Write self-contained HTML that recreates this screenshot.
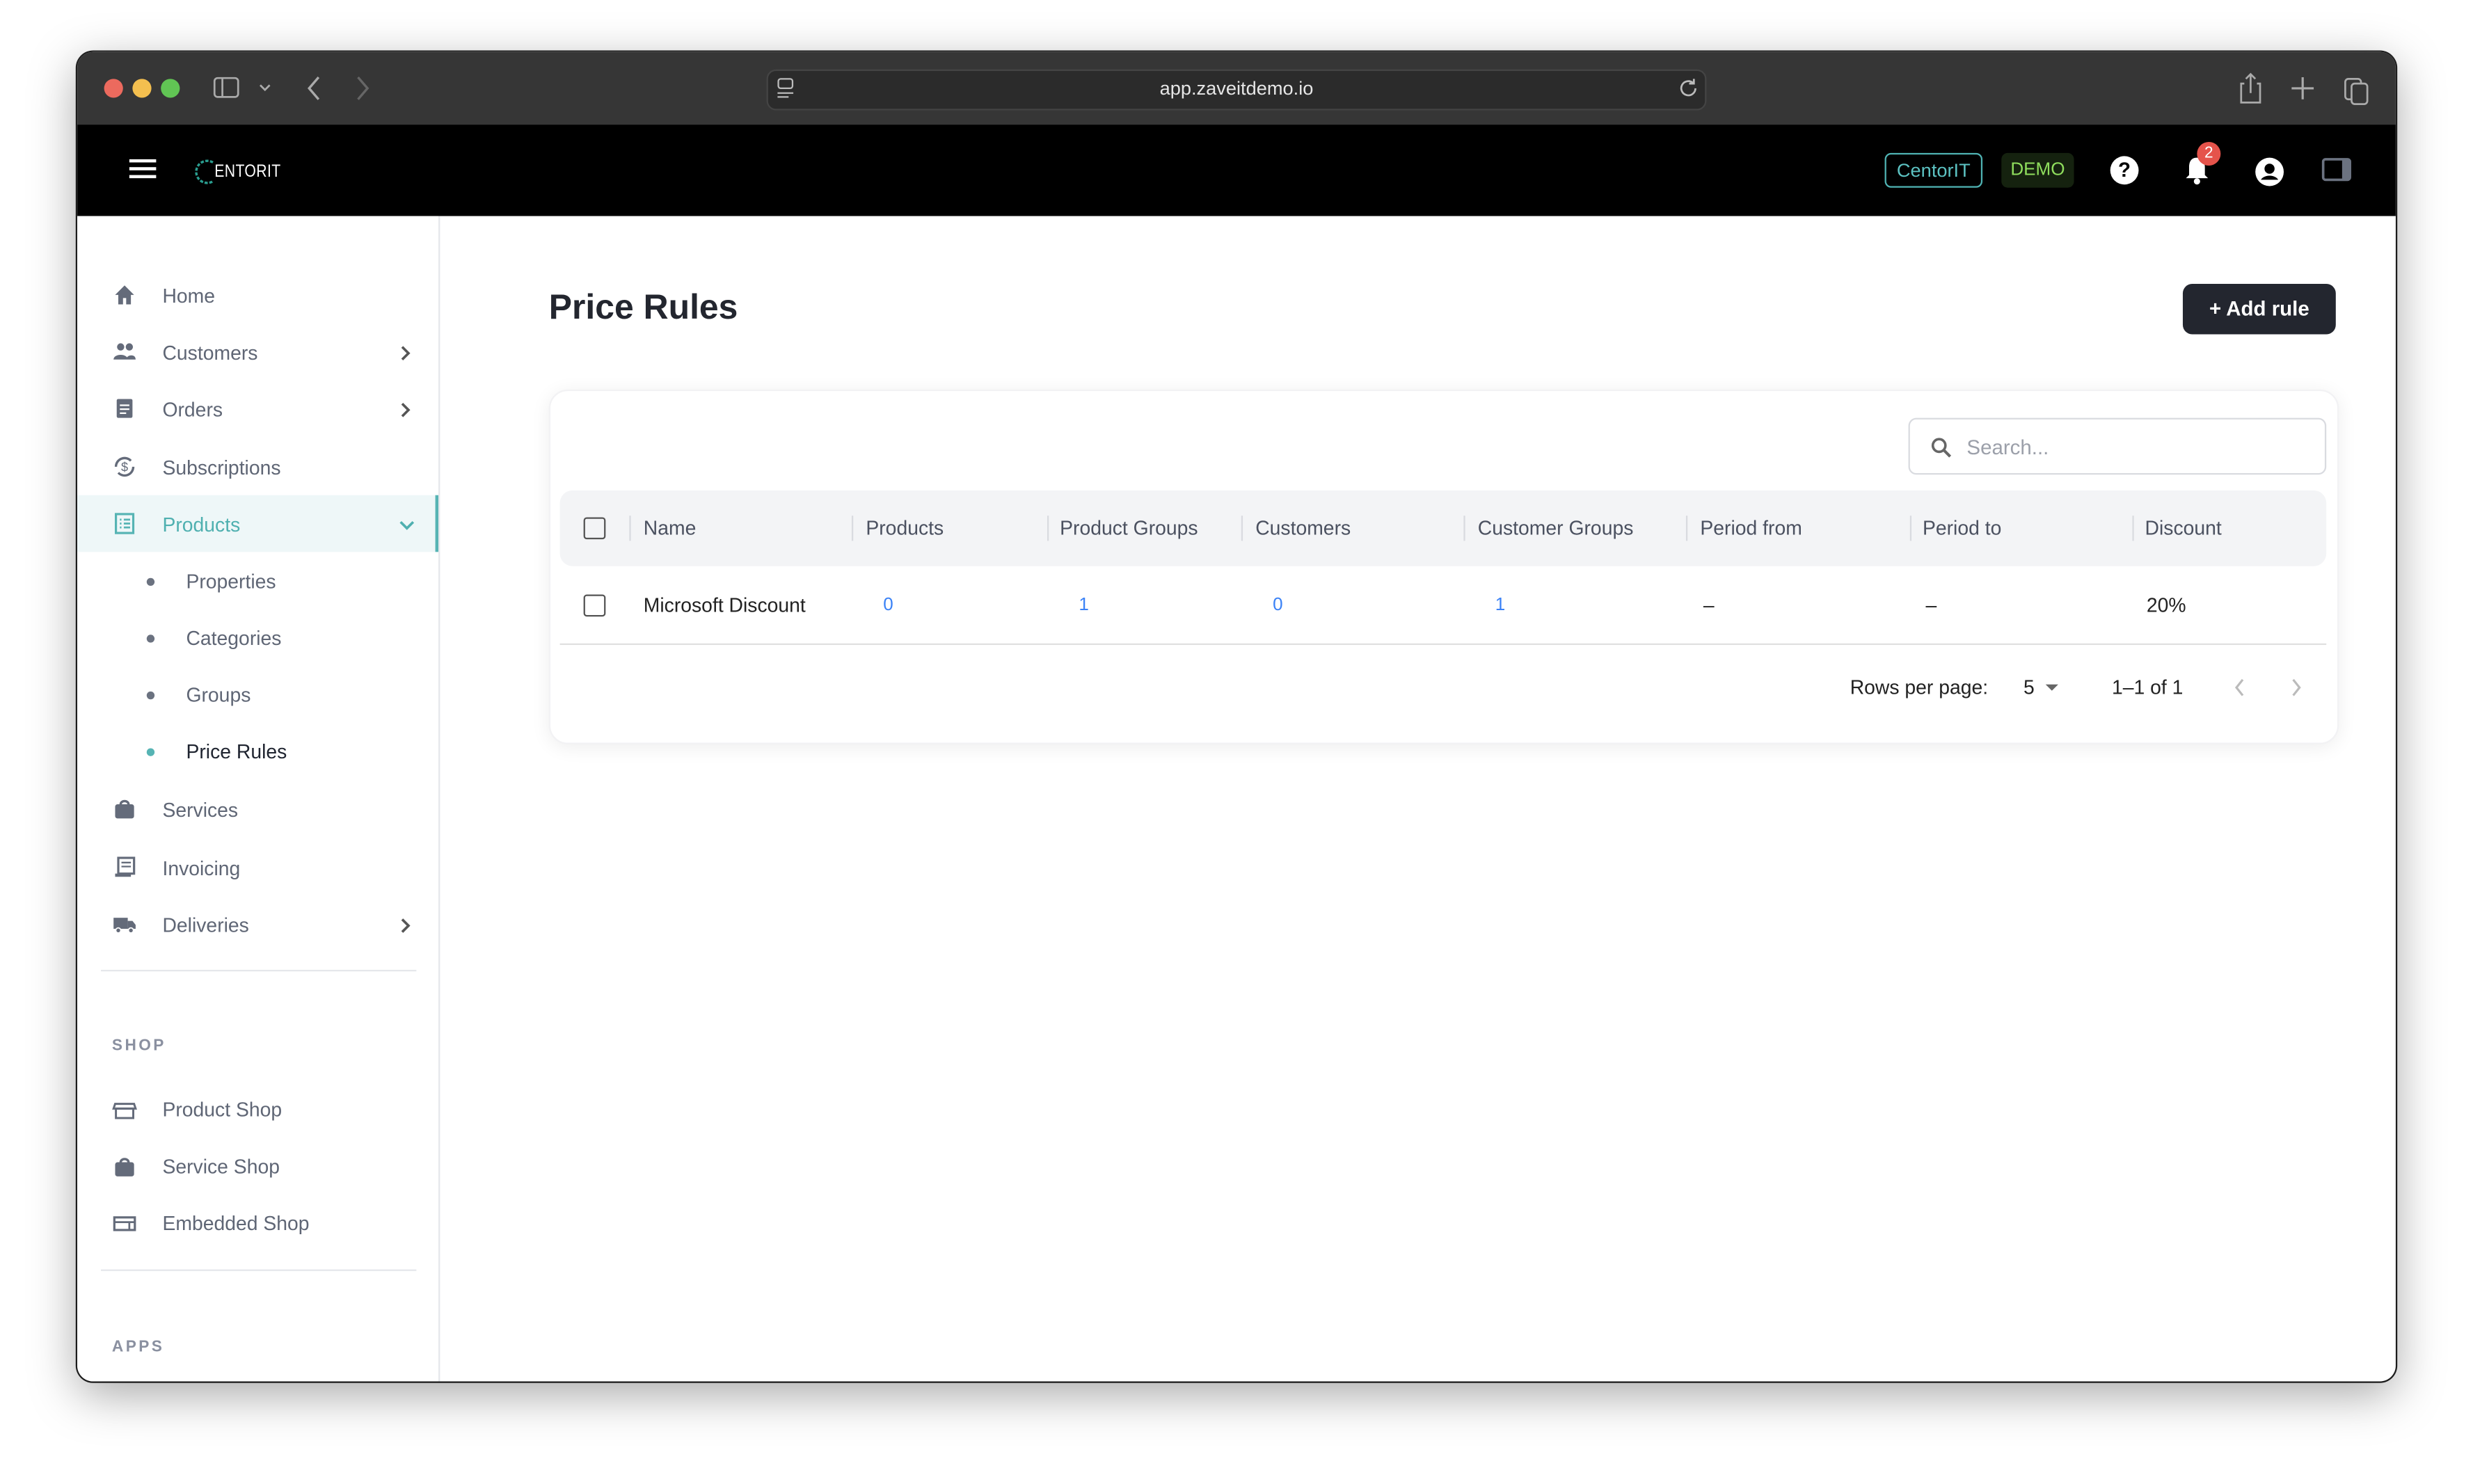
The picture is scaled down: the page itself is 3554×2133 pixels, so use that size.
<!DOCTYPE html>
<html><head><meta charset="utf-8"><style>
html,body{margin:0;padding:0;width:3554px;height:2132px;overflow:hidden;background:#fff;font-family:"Liberation Sans",sans-serif}
#s{position:absolute;left:0;top:0;width:1568px;height:941px;transform:scale(2.26658);transform-origin:0 0}
.a{position:absolute}
.win{left:49px;top:33px;width:1470px;height:843px;border-radius:10px;overflow:hidden;background:#fff;box-shadow:0 8px 30px rgba(0,0,0,.35),0 0 0 1px #222}
.tb{left:0;top:0;width:1470px;height:46px;background:#363636}
.hd{left:0;top:46px;width:1470px;height:58px;background:#000}
.side{left:0;top:104px;width:229px;height:739px;border-right:1px solid #e5e7eb;background:#fff;overflow:hidden}
.in{position:absolute;left:0;top:-33px;width:229px;height:800px}
.it{position:absolute;left:54px;font-size:12.5px;color:#5f6675;transform:translateY(-50%)}
.ic{position:absolute;left:22px;width:16px;height:16px;transform:translateY(-50%)}
.sub{position:absolute;left:69px;font-size:12.5px;color:#5f6675;transform:translateY(-50%)}
.dot{position:absolute;left:44px;width:5px;height:5px;border-radius:50%;background:#6b7280;transform:translateY(-50%)}
.chev{position:absolute;left:203px;transform:translateY(-50%)}
.th{position:absolute;top:0;height:48px;line-height:48px;font-size:12.5px;color:#4b5160}
.sep{position:absolute;top:16px;width:1px;height:16px;background:#d9dbe0}
.td{position:absolute;top:73px;font-size:12.5px;color:#222;transform:translateY(-50%)}
.bl{color:#3b82f6;font-size:11.5px}
</style></head><body><div id="s">
<div class="a win">
 <div class="a tb">
  <div class="a" style="left:17px;top:17px;width:12px;height:12px;border-radius:50%;background:#ec6a5e"></div>
  <div class="a" style="left:35px;top:17px;width:12px;height:12px;border-radius:50%;background:#f4bf4f"></div>
  <div class="a" style="left:53px;top:17px;width:12px;height:12px;border-radius:50%;background:#61c554"></div>
  <svg class="a" style="left:86px;top:15px" width="40" height="16" viewBox="0 0 40 16"><rect x="1" y="1.5" width="15" height="12" rx="2" fill="none" stroke="#aaa" stroke-width="1.2"/><line x1="6" y1="1.5" x2="6" y2="13.5" stroke="#aaa" stroke-width="1.2"/><path d="M30 6l3 3 3-3" fill="none" stroke="#aaa" stroke-width="1.2"/></svg>
  <svg class="a" style="left:143px;top:14px" width="50" height="18"><path d="M10 2l-6 7 6 7" fill="none" stroke="#aaa" stroke-width="1.5"/><path d="M35 2l6 7-6 7" fill="none" stroke="#666" stroke-width="1.5"/></svg>
  <div class="a" style="left:437px;top:11px;width:594px;height:24px;border-radius:6px;background:#2b2b2b;border:1px solid #444"></div>
  <svg class="a" style="left:443px;top:16px" width="12" height="14"><rect x="1.5" y="1" width="9" height="6" rx="1.5" fill="none" stroke="#bbb"/><line x1="1" y1="10" x2="11" y2="10" stroke="#bbb"/><line x1="1" y1="12.5" x2="8" y2="12.5" stroke="#bbb"/></svg>
  <div class="a" style="left:437px;top:11px;width:596px;height:24px;line-height:24px;text-align:center;color:#e6e6e6;font-size:12px">app.zaveitdemo.io</div>
  <svg class="a" style="left:1015px;top:16px" width="14" height="14"><path d="M11 7a4.5 4.5 0 1 1-1.5-3.4M10 1v3h-3" fill="none" stroke="#bbb" stroke-width="1.2"/></svg>
  <svg class="a" style="left:1370px;top:12px" width="110" height="22"><path d="M4 8h-2v12h12v-12h-2M8 2v12M5 5l3-3 3 3" fill="none" stroke="#aaa" stroke-width="1.2"/><path d="M41 4v14M34 11h14" stroke="#aaa" stroke-width="1.4"/><rect x="68" y="5" width="10" height="13" rx="2" fill="none" stroke="#aaa" stroke-width="1.2"/><rect x="72" y="8" width="10" height="13" rx="2" fill="#363636" stroke="#aaa" stroke-width="1.2"/></svg>
 </div>
 <div class="a hd">
  <div class="a" style="left:33px;top:22px;width:17px;height:2px;background:#fff;box-shadow:0 5px 0 #fff,0 10px 0 #fff"></div>
  <svg class="a" style="left:74px;top:21px" width="14" height="18"><path d="M12 3a7 7 0 1 0 0 12" fill="none" stroke="#2a9d8f" stroke-width="1.5" stroke-dasharray="2 1"/></svg>
  <div class="a" style="left:87px;top:24px;color:#fff;font-size:11px;letter-spacing:.2px;transform:scaleX(.85);transform-origin:0 0">ENTORIT</div>
  <div class="a" style="left:1146px;top:18px;width:60px;height:20px;border:1px solid #4fb3b3;border-radius:4px;color:#5cc2c2;font-size:12px;line-height:20px;text-align:center">CentorIT</div>
  <div class="a" style="left:1220px;top:18px;width:46px;height:22px;background:#15220f;border-radius:4px;color:#8fde5d;font-size:11.5px;line-height:22px;text-align:center">DEMO</div>
  <div class="a" style="left:1289px;top:20px;width:18px;height:18px;border-radius:50%;background:#fff;color:#000;font-weight:bold;font-size:13px;line-height:18px;text-align:center">?</div>
  <svg class="a" style="left:1335px;top:19px" width="18" height="20"><path d="M9 2c-4 0-5 3-5 6v5l-2 2h14l-2-2v-5c0-3-1-6-5-6z" fill="#fff"/><circle cx="9" cy="17" r="2" fill="#fff"/></svg>
  <div class="a" style="left:1344px;top:11px;width:15px;height:15px;border-radius:50%;background:#e5534b;color:#fff;font-size:10px;line-height:15px;text-align:center">2</div>
  <svg class="a" style="left:1380px;top:20px" width="20" height="20"><circle cx="10" cy="10" r="9" fill="#fff"/><circle cx="10" cy="8" r="3.2" fill="#000"/><path d="M4.5 15c2-3.5 9-3.5 11 0" fill="#000"/></svg>
  <svg class="a" style="left:1423px;top:20px" width="20" height="18"><rect x="1" y="2" width="17" height="13" rx="1.5" fill="none" stroke="#6b7280" stroke-width="1.6"/><rect x="13" y="2" width="5" height="13" fill="#6b7280"/></svg>
 </div>
 <div class="a side"><div class="in">
  <svg class="ic" style="top:83px" viewBox="0 0 16 16"><path d="M8 2l6 6h-2v6h-3v-4h-2v4h-3v-6h-2z" fill="#646b7a"/></svg>
  <div class="it" style="top:84px">Home</div>
  <svg class="ic" style="top:119px" viewBox="0 0 16 16"><circle cx="5.5" cy="5" r="2.3" fill="#646b7a"/><circle cx="11" cy="5" r="2.3" fill="#646b7a"/><path d="M1 13c0-4 9-4 9 0zM9 13c0-3 6-4 6 0z" fill="#646b7a"/></svg>
  <div class="it" style="top:120px">Customers</div>
  <svg class="chev" style="top:120px" width="10" height="12"><path d="M3 2l4 4-4 4" fill="none" stroke="#555" stroke-width="1.6"/></svg>
  <svg class="ic" style="top:155px" viewBox="0 0 16 16"><rect x="3" y="2" width="10" height="12" rx="1" fill="#646b7a"/><path d="M5 6h6M5 8.5h6M5 11h4" stroke="#fff" stroke-width="1"/></svg>
  <div class="it" style="top:156px">Orders</div>
  <svg class="chev" style="top:156px" width="10" height="12"><path d="M3 2l4 4-4 4" fill="none" stroke="#555" stroke-width="1.6"/></svg>
  <svg class="ic" style="top:192px" viewBox="0 0 16 16"><path d="M2.5 8a5.5 5.5 0 0 1 9.5-3.8M13.5 8a5.5 5.5 0 0 1-9.5 3.8" fill="none" stroke="#646b7a" stroke-width="1.5"/><text x="8" y="11" font-size="8" text-anchor="middle" fill="#646b7a" font-family="Liberation Sans">$</text></svg>
  <div class="it" style="top:193px">Subscriptions</div>
  <div class="a" style="left:0;top:210px;width:229px;height:36px;background:#eef7f8;border-right:2px solid #56b4b4;box-sizing:border-box"></div>
  <svg class="ic" style="top:228px" viewBox="0 0 16 16"><rect x="2.5" y="2" width="11" height="12" fill="none" stroke="#56b4b4" stroke-width="1.4"/><path d="M5 5.5h1M7.5 5.5h4M5 8h1M7.5 8h4M5 10.5h1M7.5 10.5h4" stroke="#56b4b4" stroke-width="1.2"/></svg>
  <div class="it" style="top:229px;color:#4fb0b0">Products</div>
  <svg class="chev" style="top:229px" width="12" height="10"><path d="M2 3l4 4 4-4" fill="none" stroke="#4fb0b0" stroke-width="1.6"/></svg>
  <div class="dot" style="top:265px"></div><div class="sub" style="top:265px">Properties</div>
  <div class="dot" style="top:301px"></div><div class="sub" style="top:301px">Categories</div>
  <div class="dot" style="top:337px"></div><div class="sub" style="top:337px">Groups</div>
  <div class="dot" style="top:373px;background:#56b4b4"></div><div class="sub" style="top:373px;color:#1f2430">Price Rules</div>
  <svg class="ic" style="top:409px" viewBox="0 0 16 16"><rect x="2" y="5" width="12" height="9" rx="1.5" fill="#646b7a"/><path d="M5.5 5a2.5 2 0 0 1 5 0" fill="none" stroke="#646b7a" stroke-width="1.5"/></svg>
  <div class="it" style="top:410px">Services</div>
  <svg class="ic" style="top:446px" viewBox="0 0 16 16"><rect x="4" y="2" width="10" height="10" fill="none" stroke="#646b7a" stroke-width="1.4"/><path d="M6 5h6M6 7.5h6" stroke="#646b7a"/><path d="M2 12h10v2h-10z" fill="#646b7a"/></svg>
  <div class="it" style="top:447px">Invoicing</div>
  <svg class="ic" style="top:482px" viewBox="0 0 16 16"><rect x="1" y="4" width="9" height="7" fill="#646b7a"/><path d="M10 6h3l2 2.5v2.5h-5z" fill="#646b7a"/><circle cx="4" cy="12" r="1.6" fill="#646b7a" stroke="#fff" stroke-width=".8"/><circle cx="12" cy="12" r="1.6" fill="#646b7a" stroke="#fff" stroke-width=".8"/></svg>
  <div class="it" style="top:483px">Deliveries</div>
  <svg class="chev" style="top:483px" width="10" height="12"><path d="M3 2l4 4-4 4" fill="none" stroke="#555" stroke-width="1.6"/></svg>
  <div class="a" style="left:15px;top:511px;width:200px;height:1px;background:#e5e7eb"></div>
  <div class="a" style="left:22px;top:554px;font-size:10px;font-weight:bold;letter-spacing:1.5px;color:#8a90a0">SHOP</div>
  <svg class="ic" style="top:600px" viewBox="0 0 16 16"><path d="M2 4h12l1 3h-14z" fill="none" stroke="#646b7a" stroke-width="1.3"/><rect x="2.5" y="7" width="11" height="6" fill="none" stroke="#646b7a" stroke-width="1.3"/></svg>
  <div class="it" style="top:600px">Product Shop</div>
  <svg class="ic" style="top:636px" viewBox="0 0 16 16"><rect x="2" y="5" width="12" height="9" rx="1.5" fill="#646b7a"/><path d="M5.5 5a2.5 2 0 0 1 5 0" fill="none" stroke="#646b7a" stroke-width="1.5"/></svg>
  <div class="it" style="top:636px">Service Shop</div>
  <svg class="ic" style="top:672px" viewBox="0 0 16 16"><rect x="1.5" y="4" width="13" height="8" fill="none" stroke="#646b7a" stroke-width="1.4"/><path d="M1.5 7h13M11 7v5" stroke="#646b7a" stroke-width="1.2"/></svg>
  <div class="it" style="top:672px">Embedded Shop</div>
  <div class="a" style="left:15px;top:701px;width:200px;height:1px;background:#e5e7eb"></div>
  <div class="a" style="left:22px;top:745px;font-size:10px;font-weight:bold;letter-spacing:1.5px;color:#8a90a0">APPS</div>
 </div></div>
 <div class="a" style="left:299px;top:149px;font-size:22px;font-weight:bold;color:#23262f">Price Rules</div>
 <div class="a" style="left:1335px;top:147px;width:97px;height:32px;border-radius:6px;background:#23262f;color:#fff;font-size:13px;font-weight:bold;line-height:32px;text-align:center">+ Add rule</div>
 <div class="a" style="left:299px;top:214px;width:1133px;height:223px;border-radius:12px;background:#fff;box-shadow:0 2px 12px rgba(0,0,0,.07);border:1px solid #f2f2f4">
  <div class="a" style="left:861px;top:17px;width:263px;height:34px;border:1px solid #d9dbe0;border-radius:5px"></div>
  <svg class="a" style="left:875px;top:29px" width="14" height="14"><circle cx="5.5" cy="5.5" r="4" fill="none" stroke="#666" stroke-width="1.6"/><path d="M8.5 8.5l4 4" stroke="#666" stroke-width="1.8"/></svg>
  <div class="a" style="left:898px;top:28px;font-size:13px;color:#9ca0aa">Search...</div>
  <div class="a" style="left:6px;top:63px;width:1120px;height:48px;background:#f3f4f6;border-radius:8px">
   <div class="a" style="left:15px;top:17px;width:12px;height:12px;border:1.6px solid #555;border-radius:2px"></div>
   <div class="sep" style="left:44px"></div><div class="th" style="left:53px">Name</div>
   <div class="sep" style="left:185px"></div><div class="th" style="left:194px">Products</div>
   <div class="sep" style="left:309px"></div><div class="th" style="left:317px">Product Groups</div>
   <div class="sep" style="left:432px"></div><div class="th" style="left:441px">Customers</div>
   <div class="sep" style="left:573px"></div><div class="th" style="left:582px">Customer Groups</div>
   <div class="sep" style="left:714px"></div><div class="th" style="left:723px">Period from</div>
   <div class="sep" style="left:856px"></div><div class="th" style="left:864px">Period to</div>
   <div class="sep" style="left:997px"></div><div class="th" style="left:1005px">Discount</div>
  </div>
  <div class="a" style="left:21px;top:129px;width:12px;height:12px;border:1.6px solid #555;border-radius:2px"></div>
  <div class="td" style="left:59px;top:136px">Microsoft Discount</div>
  <div class="td bl" style="left:211px;top:136px">0</div>
  <div class="td bl" style="left:335px;top:136px">1</div>
  <div class="td bl" style="left:458px;top:136px">0</div>
  <div class="td bl" style="left:599px;top:136px">1</div>
  <div class="td" style="left:731px;top:136px">–</div>
  <div class="td" style="left:872px;top:136px">–</div>
  <div class="td" style="left:1012px;top:136px">20%</div>
  <div class="a" style="left:6px;top:160px;width:1120px;height:1px;background:#e0e0e0"></div>
  <div class="td" style="left:824px;top:188px;font-size:12.5px">Rows per page:</div>
  <div class="td" style="left:934px;top:188px">5</div>
  <div class="a" style="left:948px;top:186px;border:4px solid transparent;border-top:4px solid #666"></div>
  <div class="td" style="left:990px;top:188px">1–1 of 1</div>
  <svg class="a" style="left:1066px;top:182px" width="50" height="12"><path d="M7 1l-4 5 4 5" fill="none" stroke="#bbb" stroke-width="1.4"/><path d="M39 1l4 5-4 5" fill="none" stroke="#bbb" stroke-width="1.4"/></svg>
 </div>
</div>
</div></body></html>
